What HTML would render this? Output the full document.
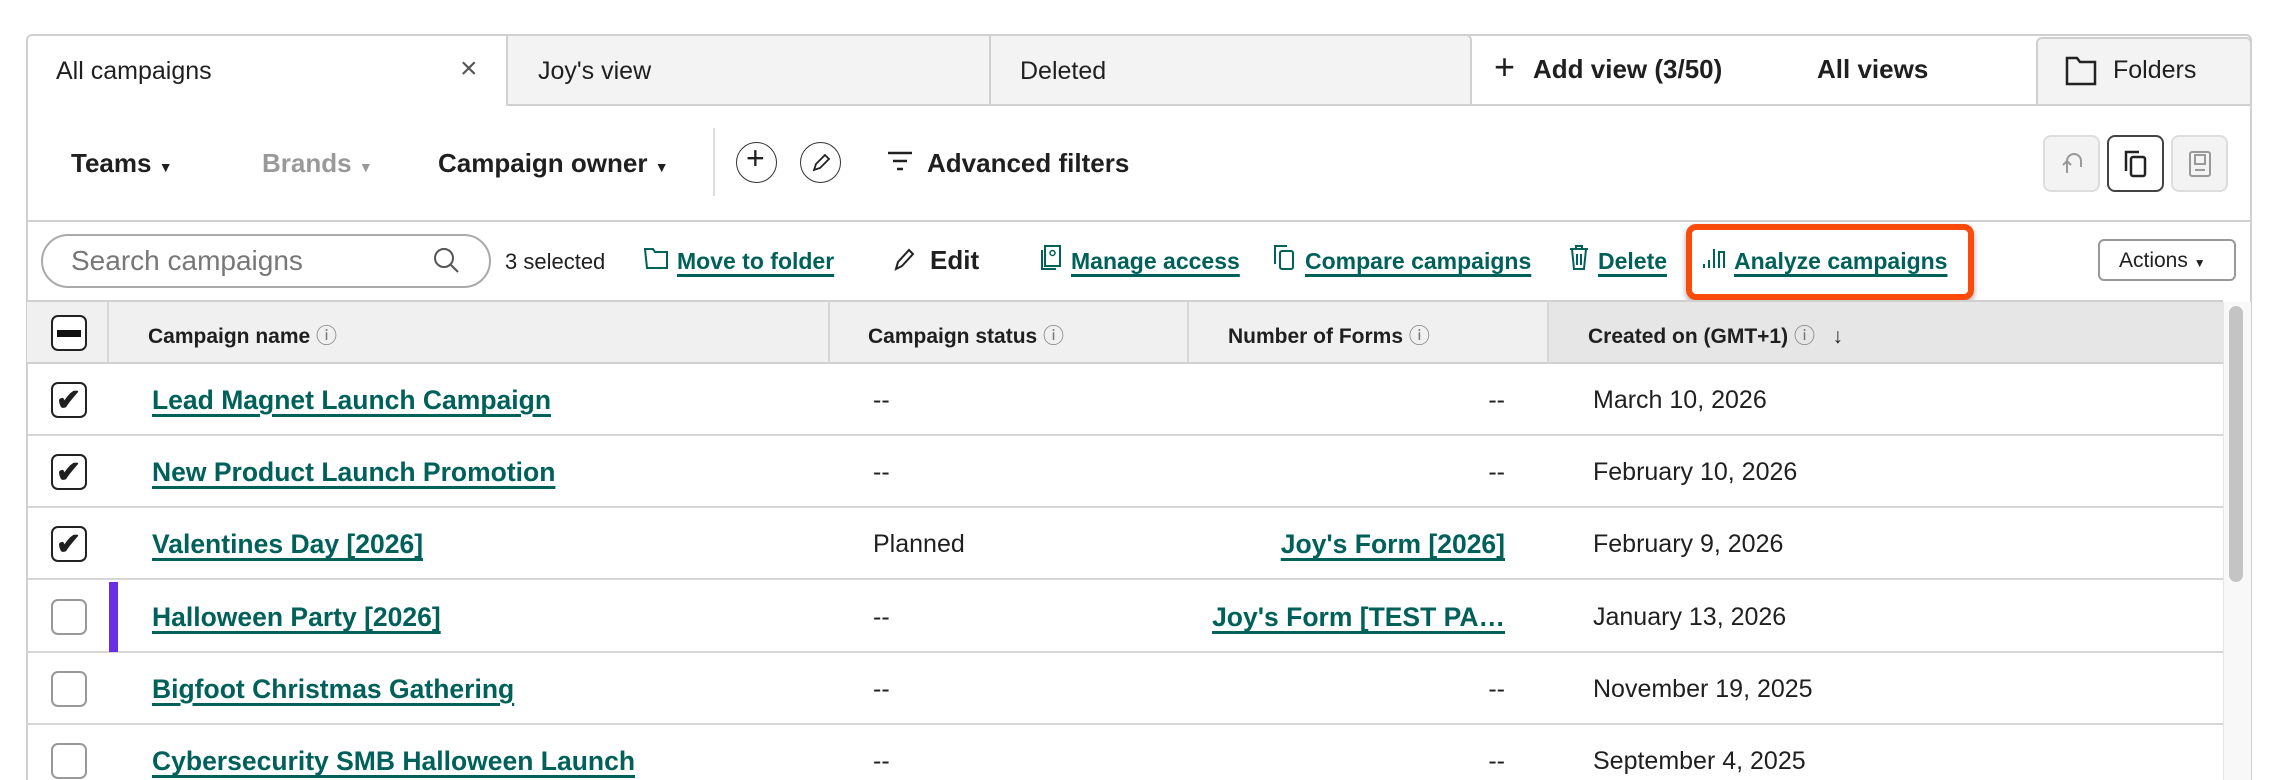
<!DOCTYPE html>
<html style="overflow:hidden;height:780px"><head><meta charset="utf-8"><style>
*{box-sizing:border-box;margin:0;padding:0}
body{width:2280px;height:780px;background:#fff;font-family:"Liberation Sans",sans-serif;color:#1f1f1f;position:relative;overflow:hidden}
.a{position:absolute;white-space:nowrap}
.t{font-size:25px}
.b{font-weight:bold}
.lnk{color:#00605a;font-weight:bold;text-decoration:underline;text-decoration-thickness:3px;text-underline-offset:5px}
.rl{font-size:26.5px}
.cb{position:absolute;left:51px;width:36px;height:36px;border:2px solid #999;border-radius:7px;background:#fff}
.cb.on{border-color:#222}
.row{position:absolute;left:27px;width:2196px;height:72px;border-bottom:2px solid #d6d6d6}
.ibtn{position:absolute;top:135px;width:57px;height:57px;border:2px solid #ddd;border-radius:8px;background:#f3f3f3}
.circ{position:absolute;top:142px;width:41px;height:41px;border:1.5px solid #333;border-radius:50%}
</style></head><body>
<div class="a" style="left:26px;top:34px;width:2226px;height:746px;border:2px solid #d0d0d0;border-bottom:none;border-radius:6px 6px 0 0"></div>
<div class="a" style="left:506px;top:34px;width:966px;height:72px;background:#f3f3f3;border:2px solid #d0d0d0;border-top-right-radius:6px"></div>
<div class="a" style="left:989px;top:34px;width:2px;height:72px;background:#d0d0d0"></div>
<div class="a" style="left:1472px;top:104px;width:566px;height:2px;background:#d0d0d0"></div>
<div class="a" style="left:2036px;top:37px;width:216px;height:69px;background:#f3f3f3;border:2px solid #d0d0d0;border-top-left-radius:6px;border-top-right-radius:6px"></div>
<div class="a t" style="left:56px;top:57px">All campaigns</div>
<div class="a" style="left:460px;top:52px;font-size:30px;color:#555;font-weight:300">×</div>
<div class="a t" style="left:538px;top:57px">Joy's view</div>
<div class="a t" style="left:1020px;top:57px">Deleted</div>
<div class="a" style="left:1494px;top:46px;font-size:36px;font-weight:300">+</div>
<div class="a b" style="left:1533px;top:54px;font-size:26px">Add view (3/50)</div>
<div class="a b" style="left:1817px;top:54px;font-size:26px">All views</div>
<svg class="a" style="left:2065px;top:56px" width="32" height="30" viewBox="0 0 32 30"><path d="M2 2h10l3 4h15v22H2z" fill="none" stroke="#222" stroke-width="2.5"/></svg>
<div class="a t" style="left:2113px;top:56px">Folders</div>
<div class="a b" style="left:71px;top:148px;font-size:26px">Teams <span style="font-size:14px">▼</span></div>
<div class="a b" style="left:262px;top:148px;color:#999;font-size:26px">Brands <span style="font-size:14px">▼</span></div>
<div class="a b" style="left:438px;top:148px;font-size:26px">Campaign owner <span style="font-size:14px">▼</span></div>
<div class="a" style="left:713px;top:128px;width:2px;height:68px;background:#ddd"></div>
<div class="circ" style="left:736px"></div><div class="a" style="left:746px;top:140px;font-size:32px;font-weight:300">+</div>
<div class="circ" style="left:800px"></div>
<svg class="a" style="left:810px;top:152px" width="22" height="22" viewBox="0 0 22 22"><path d="M4 18l2-6 9-9 4 4-9 9z" fill="none" stroke="#222" stroke-width="1.8"/></svg>
<svg class="a" style="left:886px;top:150px" width="28" height="24" viewBox="0 0 28 24"><path d="M2 3h24M7 11h14M11 19h6" stroke="#222" stroke-width="2.5"/></svg>
<div class="a b" style="left:927px;top:148px;font-size:26px">Advanced filters</div>
<div class="ibtn" style="left:2043px"></div>
<svg class="a" style="left:2059px;top:149px" width="26" height="28" viewBox="0 0 26 28"><path d="M8 24V12a7 7 0 0 1 14 0v6M8 12l-4 4M8 12l4 4" fill="none" stroke="#999" stroke-width="2"/></svg>
<div class="ibtn" style="left:2107px;background:#fff;border-color:#444"></div>
<svg class="a" style="left:2123px;top:149px" width="26" height="30" viewBox="0 0 26 30"><path d="M3 22V3h13" fill="none" stroke="#222" stroke-width="2.5"/><rect x="8" y="8" width="14" height="19" rx="2" fill="none" stroke="#222" stroke-width="2.5"/></svg>
<div class="ibtn" style="left:2171px"></div>
<svg class="a" style="left:2187px;top:149px" width="26" height="30" viewBox="0 0 26 30"><rect x="3" y="3" width="20" height="24" rx="2" fill="none" stroke="#999" stroke-width="2"/><rect x="8" y="6" width="10" height="9" fill="none" stroke="#999" stroke-width="2"/><path d="M8 21h10" stroke="#999" stroke-width="2"/></svg>
<div class="a" style="left:27px;top:220px;width:2224px;height:2px;background:#d0d0d0"></div>
<div class="a" style="left:41px;top:234px;width:450px;height:54px;border:2px solid #aaa;border-radius:27px"></div>
<div class="a" style="left:71px;top:245px;font-size:28px;color:#777">Search campaigns</div>
<svg class="a" style="left:432px;top:246px" width="30" height="30" viewBox="0 0 30 30"><circle cx="12" cy="12" r="9" fill="none" stroke="#555" stroke-width="2"/><path d="M19 19l7 7" stroke="#555" stroke-width="2"/></svg>
<div class="a" style="left:505px;top:249px;font-size:22px">3 selected</div>
<svg class="a" style="left:643px;top:245px" width="26" height="26" viewBox="0 0 26 26"><path d="M2 4h8l2 3h12v16H4z" fill="none" stroke="#00605a" stroke-width="2"/></svg>
<div class="a lnk" style="left:677px;top:248px;font-size:23px">Move to folder</div>
<svg class="a" style="left:893px;top:246px" width="24" height="26" viewBox="0 0 24 26"><path d="M3 23l2-7 11-12 4 4-11 12z" fill="none" stroke="#222" stroke-width="2"/></svg>
<div class="a b" style="left:930px;top:245px;font-size:26px">Edit</div>
<svg class="a" style="left:1040px;top:244px" width="22" height="28" viewBox="0 0 22 28"><rect x="5" y="2" width="15" height="20" fill="none" stroke="#00605a" stroke-width="2"/><path d="M2 6v19h14" fill="none" stroke="#00605a" stroke-width="2"/><circle cx="12.5" cy="9" r="2.5" fill="none" stroke="#00605a" stroke-width="1.5"/></svg>
<div class="a lnk" style="left:1071px;top:248px;font-size:23px">Manage access</div>
<svg class="a" style="left:1273px;top:244px" width="24" height="28" viewBox="0 0 24 28"><path d="M2 20V2h12" fill="none" stroke="#00605a" stroke-width="2"/><rect x="7" y="7" width="13" height="18" rx="2" fill="none" stroke="#00605a" stroke-width="2"/></svg>
<div class="a lnk" style="left:1305px;top:248px;font-size:23px">Compare campaigns</div>
<svg class="a" style="left:1568px;top:244px" width="22" height="28" viewBox="0 0 22 28"><path d="M2 5h18M8 5V2h6v3M4 5l2 20h10l2-20M9 10v11M13 10v11" fill="none" stroke="#00605a" stroke-width="2"/></svg>
<div class="a lnk" style="left:1598px;top:248px;font-size:23px">Delete</div>
<div class="a" style="left:1686px;top:224px;width:288px;height:76px;border:6px solid #fa4b0a;border-radius:10px;box-shadow:0 3px 6px rgba(0,0,0,.35)"></div>
<svg class="a" style="left:1702px;top:246px" width="26" height="26" viewBox="0 0 26 26"><path d="M2 22v-4M7 22v-8M12 22V3M17 22V6h5v16" fill="none" stroke="#00605a" stroke-width="2"/></svg>
<div class="a lnk" style="left:1734px;top:248px;font-size:23px">Analyze campaigns</div>
<div class="a" style="left:2098px;top:239px;width:138px;height:42px;border:2px solid #999;border-radius:6px"></div>
<div class="a" style="left:2119px;top:249px;font-size:21px">Actions <span style="font-size:12px">▼</span></div>
<div class="a" style="left:27px;top:300px;width:2196px;height:64px;background:#f0f0f0;border-top:2px solid #d0d0d0;border-bottom:2px solid #d0d0d0"></div>
<div class="a" style="left:1548px;top:302px;width:675px;height:60px;background:#e6e6e6"></div>
<div class="a" style="left:107px;top:300px;width:2px;height:64px;background:#d6d6d6"></div>
<div class="a" style="left:828px;top:300px;width:2px;height:64px;background:#d6d6d6"></div>
<div class="a" style="left:1187px;top:300px;width:2px;height:64px;background:#d6d6d6"></div>
<div class="a" style="left:1547px;top:300px;width:2px;height:64px;background:#d6d6d6"></div>
<div class="cb on" style="top:315px"></div><div class="a" style="left:57px;top:330px;width:24px;height:7px;background:#111"></div>
<div class="a b" style="left:148px;top:320px;font-size:21px">Campaign name <span style="font-weight:normal;color:#777">ⓘ</span></div>
<div class="a b" style="left:868px;top:320px;font-size:21px">Campaign status <span style="font-weight:normal;color:#777">ⓘ</span></div>
<div class="a b" style="left:1228px;top:320px;font-size:21px">Number of Forms <span style="font-weight:normal;color:#777">ⓘ</span></div>
<div class="a b" style="left:1588px;top:320px;font-size:21px">Created on (GMT+1) <span style="font-weight:normal;color:#777">ⓘ</span> &nbsp; <span style="font-weight:normal">↓</span></div>
<div class="a" style="left:2223px;top:302px;width:28px;height:478px;background:#f8f8f8;border-left:1px solid #e5e5e5"></div>
<div class="a" style="left:2229px;top:306px;width:14px;height:276px;background:#c4c4c4;border-radius:7px"></div>
<div class="row" style="top:364px"></div>
<div class="row" style="top:436px"></div>
<div class="row" style="top:508px"></div>
<div class="row" style="top:581px"></div>
<div class="row" style="top:653px"></div>
<div class="a" style="left:109px;top:582px;width:9px;height:70px;background:#6a2fe0"></div>
<div class="cb on" style="top:382px"></div><div class="a b" style="left:56px;top:383px;font-size:30px">✔</div>
<div class="cb on" style="top:454px"></div><div class="a b" style="left:56px;top:455px;font-size:30px">✔</div>
<div class="cb on" style="top:526px"></div><div class="a b" style="left:56px;top:527px;font-size:30px">✔</div>
<div class="cb" style="top:599px"></div>
<div class="cb" style="top:671px"></div>
<div class="cb" style="top:743px"></div>
<div class="a rl lnk" style="left:152px;top:385px">Lead Magnet Launch Campaign</div>
<div class="a rl lnk" style="left:152px;top:457px">New Product Launch Promotion</div>
<div class="a rl lnk" style="left:152px;top:529px">Valentines Day [2026]</div>
<div class="a rl lnk" style="left:152px;top:602px">Halloween Party [2026]</div>
<div class="a rl lnk" style="left:152px;top:674px">Bigfoot Christmas Gathering</div>
<div class="a rl lnk" style="left:152px;top:746px">Cybersecurity SMB Halloween Launch</div>
<div class="a t" style="left:873px;top:386px">--</div>
<div class="a t" style="left:873px;top:458px">--</div>
<div class="a t" style="left:873px;top:530px">Planned</div>
<div class="a t" style="left:873px;top:603px">--</div>
<div class="a t" style="left:873px;top:675px">--</div>
<div class="a t" style="left:873px;top:747px">--</div>
<div class="a t" style="right:775px;top:386px">--</div>
<div class="a t" style="right:775px;top:458px">--</div>
<div class="a rl lnk" style="right:775px;top:529px">Joy's Form [2026]</div>
<div class="a rl lnk" style="right:775px;top:602px">Joy's Form [TEST PA…</div>
<div class="a t" style="right:775px;top:675px">--</div>
<div class="a t" style="right:775px;top:747px">--</div>
<div class="a t" style="left:1593px;top:386px">March 10, 2026</div>
<div class="a t" style="left:1593px;top:458px">February 10, 2026</div>
<div class="a t" style="left:1593px;top:530px">February 9, 2026</div>
<div class="a t" style="left:1593px;top:603px">January 13, 2026</div>
<div class="a t" style="left:1593px;top:675px">November 19, 2025</div>
<div class="a t" style="left:1593px;top:747px">September 4, 2025</div>
</body></html>
